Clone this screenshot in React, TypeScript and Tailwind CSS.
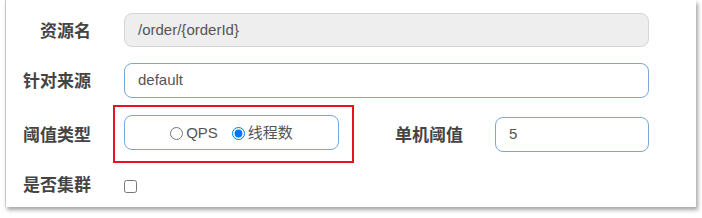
export default function App() {
  const font = { fontFamily: '"Liberation Sans", "Noto Sans CJK SC", sans-serif' };
  return (
    <div className="w-[702px] h-[218px] bg-white" style={font}>
      <div className="ml-[5px] w-[691px] h-[207px] bg-white border-l border-[#c8c8c8] shadow-[2px_3px_4px_rgba(0,0,0,0.35)] pt-[13px]">
        <div className="flex items-center h-[34px]">
          <label className="w-[85px] text-right text-[17px] font-bold text-[#444] pt-[3px]">资源名</label>
          <div className="ml-[33px] w-[525px] h-[34px] rounded-[8px] border border-[#d6d6d6] bg-[#eeeeee] flex items-center pl-[13px] pt-[1px] text-[15px] text-[#555]">
            /order/{'{'}orderId{'}'}
          </div>
        </div>

        <div className="flex items-center h-[34px] mt-[16px]">
          <label className="w-[85px] text-right text-[17px] font-bold text-[#444] pt-[3px]">针对来源</label>
          <div className="ml-[33px] w-[525px] h-[35px] rounded-[8px] border border-[#7aa8d8] bg-white flex items-center pl-[13px] pt-[1px] text-[15px] text-[#555]">
            default
          </div>
        </div>

        <div className="flex items-center mt-[8px]">
          <label className="w-[85px] text-right text-[17px] font-bold text-[#444] pt-[4px]">阈值类型</label>
          <div className="ml-[22px] w-[241px] h-[58px] border-2 border-[#e8141c] pl-[9px] pt-[8px]">
            <div className="w-[215px] h-[35px] rounded-[8px] border border-[#7aa8d8] flex items-center justify-center pt-[1px] text-[15px] text-[#555]">
              <label className="flex items-center">
                <input type="radio" name="grade" className="m-0 w-[13px] h-[13px]" />
                <span className="ml-[3px]">QPS</span>
              </label>
              <label className="flex items-center ml-[14px]">
                <input type="radio" name="grade" defaultChecked className="m-0 w-[13px] h-[13px]" />
                <span className="ml-[3px]">线程数</span>
              </label>
            </div>
          </div>
          <label className="ml-[41px] text-[17px] font-bold text-[#444] pt-[4px]">单机阈值</label>
          <div className="ml-[32px] w-[154px] h-[35px] rounded-[8px] border border-[#7aa8d8] bg-white flex items-center pl-[13px] pt-[1px] text-[15px] text-[#555]">
            5
          </div>
        </div>

        <div className="flex items-center h-[24px] mt-[11px]">
          <label className="w-[85px] text-right text-[17px] font-bold text-[#444]">是否集群</label>
          <input type="checkbox" className="ml-[33px] m-0 w-[13px] h-[13px]" />
        </div>
      </div>
    </div>
  );
}
